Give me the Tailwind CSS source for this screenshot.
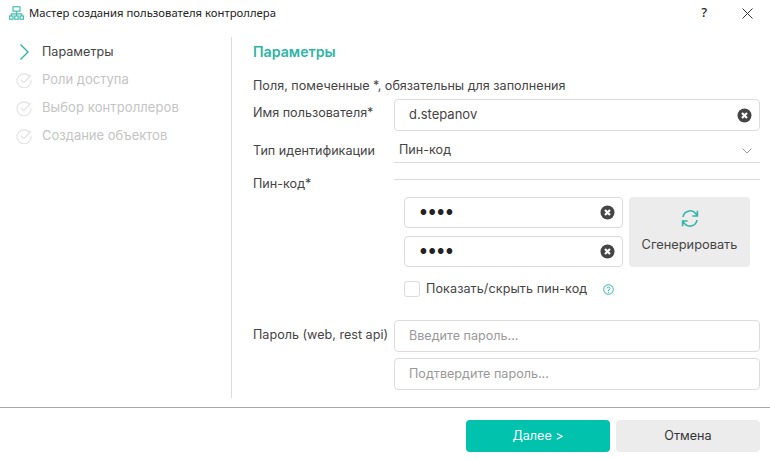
<!DOCTYPE html>
<html lang="ru">
<head>
    <meta charset="UTF-8">
    <title>Мастер создания пользователя контроллера</title>
    <script src="https://cdn.jsdelivr.net/npm/@tailwindcss/browser@4"></script>
</head>
<body class="bg-white w-[770px] h-[460px] overflow-hidden font-['Inter','Noto_Sans',sans-serif] text-[12.6px] text-[#444]">
    <!-- Title bar -->
    <div class="h-[26px] flex items-center pl-[9px] pr-[17px]">
        <svg class="w-[15px] h-[14px] text-[#45bdae]" viewBox="0 0 15 14" fill="none" stroke="currentColor" stroke-width="1.2">
            <rect x="4" y="0.8" width="7" height="4.4"/>
            <path d="M7.5 5.2v2.6M2.3 10V7.8h10.4V10M7.5 7.8V10"/>
            <rect x="0.6" y="10" width="3.4" height="3.2"/>
            <rect x="5.8" y="10" width="3.4" height="3.2"/>
            <rect x="11" y="10" width="3.4" height="3.2"/>
        </svg>
        <span class="ml-[5px] font-['Noto_Sans',sans-serif] text-[11.3px] text-[#222]">Мастер создания пользователя контроллера</span>
        <span class="ml-auto mr-[35px] font-['Noto_Sans',sans-serif] font-medium text-[13px] text-[#222]">?</span>
        <svg class="w-[11px] h-[11px] text-[#333]" viewBox="0 0 11 11" fill="none" stroke="currentColor" stroke-width="1"><path d="M0.5 0.5l10 10M10.5 0.5l-10 10"/></svg>
    </div>

    <div class="flex h-[381px]">
        <!-- Steps -->
        <div class="w-[232px] shrink-0 h-[361px] mt-[11px] border-r border-[#dcdcdc] pt-[1px] pl-[16px]">
            <div class="h-[28px] flex items-center">
                <svg class="w-[16px] h-[18px] text-[#2fb5a5]" viewBox="0 0 16 18" fill="none" stroke="currentColor" stroke-width="1.4"><path d="M4.5 1.5l7.5 7.5-7.5 7.5"/></svg>
                <span class="ml-[10px]">Параметры</span>
            </div>
            <div class="h-[28px] flex items-center text-[#c4c4c4] text-[13px]">
                <svg class="w-[16px] h-[16px] text-[#e2e2e2]" viewBox="0 0 16 16" fill="none" stroke="currentColor" stroke-width="1.2"><path d="M14 5.2A7 7 0 1 0 15 8"/><path d="M4.8 7.6l3 3 7-7.4"/></svg>
                <span class="ml-[10px]">Роли доступа</span>
            </div>
            <div class="h-[28px] flex items-center text-[#c4c4c4] text-[13px] tracking-[0.1px]">
                <svg class="w-[16px] h-[16px] text-[#e2e2e2]" viewBox="0 0 16 16" fill="none" stroke="currentColor" stroke-width="1.2"><path d="M14 5.2A7 7 0 1 0 15 8"/><path d="M4.8 7.6l3 3 7-7.4"/></svg>
                <span class="ml-[10px]">Выбор контроллеров</span>
            </div>
            <div class="h-[28px] flex items-center text-[#c4c4c4] text-[13px]">
                <svg class="w-[16px] h-[16px] text-[#e2e2e2]" viewBox="0 0 16 16" fill="none" stroke="currentColor" stroke-width="1.2"><path d="M14 5.2A7 7 0 1 0 15 8"/><path d="M4.8 7.6l3 3 7-7.4"/></svg>
                <span class="ml-[10px]">Создание объектов</span>
            </div>
        </div>

        <!-- Form -->
        <div class="w-[528px] pl-[21px] pt-[17px]">
            <h2 class="h-[18px] leading-[18px] text-[14.2px] font-semibold text-[#2fb5a5]">Параметры</h2>
            <p class="mt-[16px] h-[17px] leading-[17px]">Поля, помеченные *, обязательны для заполнения</p>

            <div class="mt-[5px] flex">
                <label class="w-[141px] pt-[5px]">Имя пользователя*</label>
                <div class="w-[366px] h-[32px] border border-[#dcdcdc] rounded-[4px] flex items-center pl-[14px] pr-[7px]">
                    <span class="text-[13px]">d.stepanov</span>
                    <svg class="ml-auto w-[15px] h-[15px]" viewBox="0 0 15 15"><circle cx="7.5" cy="7.5" r="7" fill="#444"/><path d="M5 5l5 5M10 5l-5 5" stroke="#fff" stroke-width="2.2"/></svg>
                </div>
            </div>

            <div class="mt-[1px] flex items-end">
                <label class="w-[141px] pb-[2px]">Тип идентификации</label>
                <div class="w-[366px] h-[31px] border-b border-[#dcdcdc] flex items-end pb-[2px] pl-[5px] pr-[8px]">
                    <span>Пин-код</span>
                    <svg class="ml-auto mb-[6px] w-[10px] h-[6px] text-[#999]" viewBox="0 0 10 6" fill="none" stroke="currentColor" stroke-width="1"><path d="M0.5 0.5l4.5 4.5 4.5-4.5"/></svg>
                </div>
            </div>

            <div class="flex">
                <label class="w-[141px] pt-[12px]">Пин-код*</label>
                <div class="w-[366px]">
                    <div class="h-[17px] border-b border-[#dcdcdc]"></div>
                    <div class="mt-[17px] ml-[10px] flex gap-[6px]">
                        <div class="w-[219px] flex flex-col gap-[8px]">
                            <div class="h-[31px] border border-[#dcdcdc] rounded-[4px] flex items-center pl-[15px] pr-[7px]">
                                <span class="text-[#222] text-[7.5px] tracking-[1.8px]">●●●●</span>
                                <svg class="ml-auto w-[15px] h-[15px]" viewBox="0 0 15 15"><circle cx="7.5" cy="7.5" r="7" fill="#444"/><path d="M5 5l5 5M10 5l-5 5" stroke="#fff" stroke-width="2.2"/></svg>
                            </div>
                            <div class="h-[31px] border border-[#dcdcdc] rounded-[4px] flex items-center pl-[15px] pr-[7px]">
                                <span class="text-[#222] text-[7.5px] tracking-[1.8px]">●●●●</span>
                                <svg class="ml-auto w-[15px] h-[15px]" viewBox="0 0 15 15"><circle cx="7.5" cy="7.5" r="7" fill="#444"/><path d="M5 5l5 5M10 5l-5 5" stroke="#fff" stroke-width="2.2"/></svg>
                            </div>
                        </div>
                        <button class="w-[121px] h-[70px] bg-[#ececec] rounded-[4px] flex flex-col items-center pt-[12px] text-[12.8px]">
                            <svg class="w-[18px] h-[19px] text-[#2fb5a5]" viewBox="0 0 18 19" fill="none" stroke="currentColor" stroke-width="1.6"><path d="M2 8a7.2 7.2 0 0 1 12.6-3.6L16.4 7M16.4 1.8V7h-5"/><path d="M16 11a7.2 7.2 0 0 1-12.6 3.6L1.6 12M1.6 17.2V12h5"/></svg>
                            <span class="mt-[7px]">Сгенерировать</span>
                        </button>
                    </div>
                    <div class="mt-[14px] ml-[10px] flex items-center h-[16px]">
                        <span class="w-[16px] h-[16px] border border-[#dcdcdc] rounded-[3px]"></span>
                        <span class="ml-[6px] tracking-[0.08px]">Показать/скрыть пин-код</span>
                        <svg class="ml-[16px] w-[11px] h-[11px] text-[#2fb5a5]" viewBox="0 0 11 11" fill="none" stroke="currentColor" stroke-width="1"><circle cx="5.5" cy="5.5" r="4.8"/><path d="M4 4.4a1.5 1.5 0 1 1 1.5 1.6v1M5.5 7.8v1"/></svg>
                    </div>
                </div>
            </div>

            <div class="mt-[23px] flex">
                <label class="w-[141px] pt-[6px]">Пароль (web, rest api)</label>
                <div class="w-[366px] flex flex-col gap-[6px]">
                    <div class="h-[32px] border border-[#dcdcdc] rounded-[4px] flex items-center pl-[14px] text-[#999]">Введите пароль...</div>
                    <div class="h-[32px] border border-[#dcdcdc] rounded-[4px] flex items-center pl-[14px] text-[#999]">Подтвердите пароль...</div>
                </div>
            </div>
        </div>
    </div>

    <!-- Footer -->
    <div class="h-[53px] border-t border-[#a8a8a8] flex justify-end gap-[6px] pt-[12px] pr-[10px]">
        <button class="w-[144px] h-[32px] bg-[#00c2ad] rounded-[4px] text-white"><span class="underline">Д</span>алее &gt;</button>
        <button class="w-[144px] h-[32px] bg-[#ececec] rounded-[4px] text-[#333]">Отмена</button>
    </div>
</body>
</html>
